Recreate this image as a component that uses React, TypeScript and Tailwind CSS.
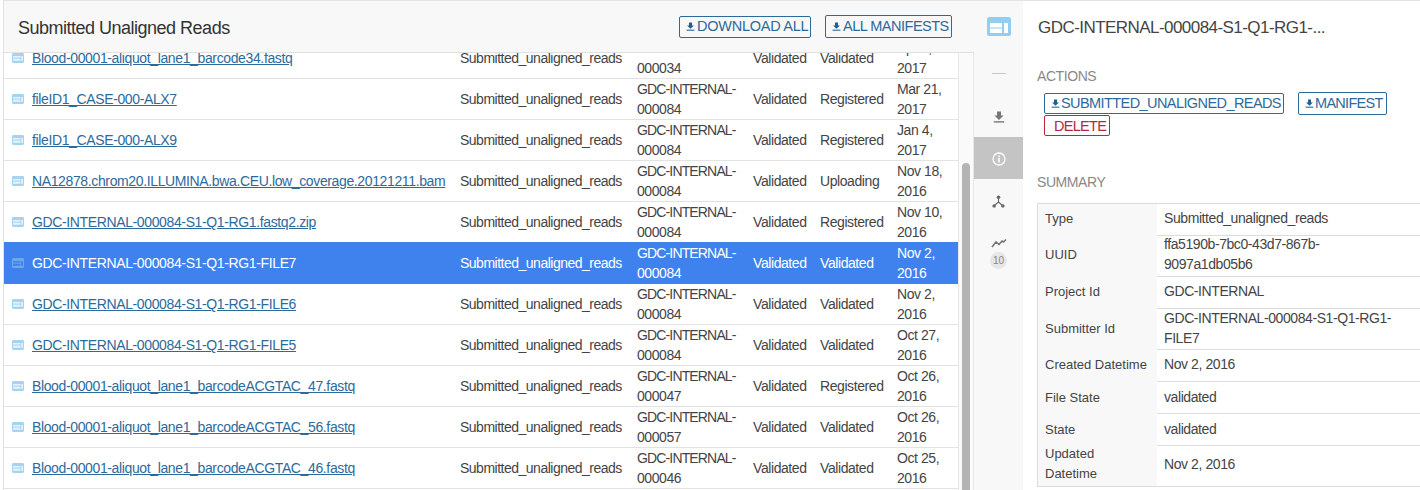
import React from "react";

const Dl = ({ c = "#1f5f95", s = 9 }: { c?: string; s?: number }) => (
  <svg width={s} height={s} viewBox="0 0 12 12" className="shrink-0">
    <path d="M4 0.5h4v4h2.6L6 9 1.4 4.5H4z" fill={c} />
    <rect x="0.8" y="10.2" width="10.4" height="1.4" fill={c} />
  </svg>
);

const FileIcon = ({ active }: { active?: boolean }) => {
  const inner = active ? "#3f82ee" : "#e3f2fb";
  return (
    <svg width="12" height="10" viewBox="0 0 12 10" className="shrink-0">
      <rect width="12" height="10" rx="1.4" fill={active ? "#6fa6ea" : "#a4d4f0"} />
      <rect x="1" y="3" width="7.4" height="1.6" fill={inner} />
      <rect x="1" y="5.6" width="7.4" height="2.2" fill={inner} />
      <rect x="9.2" y="3" width="1.8" height="4.8" fill={inner} />
    </svg>
  );
};

const rows = [
  ["Blood-00001-aliquot_lane1_barcode34.fastq", "000034", "Validated", "Apr 5,", "2017"],
  ["fileID1_CASE-000-ALX7", "000084", "Registered", "Mar 21,", "2017"],
  ["fileID1_CASE-000-ALX9", "000084", "Registered", "Jan 4,", "2017"],
  ["NA12878.chrom20.ILLUMINA.bwa.CEU.low_coverage.20121211.bam", "000084", "Uploading", "Nov 18,", "2016"],
  ["GDC-INTERNAL-000084-S1-Q1-RG1.fastq2.zip", "000084", "Registered", "Nov 10,", "2016"],
  ["GDC-INTERNAL-000084-S1-Q1-RG1-FILE7", "000084", "Validated", "Nov 2,", "2016"],
  ["GDC-INTERNAL-000084-S1-Q1-RG1-FILE6", "000084", "Validated", "Nov 2,", "2016"],
  ["GDC-INTERNAL-000084-S1-Q1-RG1-FILE5", "000084", "Validated", "Oct 27,", "2016"],
  ["Blood-00001-aliquot_lane1_barcodeACGTAC_47.fastq", "000047", "Registered", "Oct 26,", "2016"],
  ["Blood-00001-aliquot_lane1_barcodeACGTAC_56.fastq", "000057", "Validated", "Oct 26,", "2016"],
  ["Blood-00001-aliquot_lane1_barcodeACGTAC_46.fastq", "000046", "Validated", "Oct 25,", "2016"],
];

const summary: [React.ReactNode, React.ReactNode, string, string][] = [
  ["Type", "Submitted_unaligned_reads", "h-[32px]", "pb-[3px]"],
  ["UUID", <>ffa5190b-7bc0-43d7-867b-<br />9097a1db05b6</>, "h-[41px]", "pb-[4px]"],
  ["Project Id", "GDC-INTERNAL", "h-[32px]", "pb-[3px]"],
  ["Submitter Id", <>GDC-INTERNAL-000084-S1-Q1-RG1-<br />FILE7</>, "h-[41px]", "pb-[2px]"],
  ["Created Datetime", "Nov 2, 2016", "h-[32px]", "pb-[3px]"],
  ["File State", "validated", "h-[32px]", "pb-[1px]"],
  ["State", "validated", "h-[32px]", "pb-[1px]"],
  [<>Updated<br />Datetime</>, "Nov 2, 2016", "h-[40px]", "pb-[4px]"],
];

export default function App() {
  return (
    <div className="flex h-[490px] w-[1420px] overflow-hidden bg-white font-['Liberation_Sans',sans-serif] text-[14px] tracking-[-0.42px] text-[#444]">
      <div className="w-[4px] shrink-0 border-r border-[#e2e2e2] bg-white" />

      <div className="relative flex w-[970px] shrink-0 flex-col border-t border-[#e4e4e4]">
        <div className="z-10 flex h-[52px] shrink-0 items-center justify-between border-b border-[#e0e0e0] bg-[#f8f8f8] pl-[14px] pr-[22px]">
          <h1 className="pt-[3px] text-[18px] font-normal tracking-[-0.5px] text-[#333]">Submitted Unaligned Reads</h1>
          <div className="flex items-center gap-[14px]">
            <button className="flex h-[22px] w-[132px] items-center gap-[2px] whitespace-nowrap rounded-[2px] border border-[#2d6a9c] pl-[6px] text-[14.5px] tracking-[-0.25px] text-[#2d6a9c]">
              <Dl />DOWNLOAD ALL
            </button>
            <button className="flex h-[23px] w-[127px] items-center gap-[2px] whitespace-nowrap rounded-[2px] border border-[#2d6a9c] pl-[6px] text-[14.5px] tracking-[-0.5px] text-[#2d6a9c]">
              <Dl />ALL MANIFESTS
            </button>
          </div>
        </div>

        <div className="min-h-0 flex-1 overflow-hidden">
          <div className="mt-[-15px] w-[954px] leading-[20px]">
            {rows.map((r, i) => {
              const active = i === 5;
              return (
                <div
                  key={r[0]}
                  className={`grid h-[41px] grid-cols-[456px_177px_116px_67px_77px_1fr] items-center border-b ${
                    active ? "border-[#3f82ee] bg-[#3f82ee] text-white" : i === 4 ? "border-[#3f82ee]" : "border-[#e2e2e2]"
                  }`}
                >
                  <div className="flex items-center gap-[8px] pl-[8px] tracking-[-0.37px]">
                    <FileIcon active={active} />
                    <span className={active ? "" : "text-[#2d6a9c] underline"}>{r[0]}</span>
                  </div>
                  <div className="tracking-[-0.5px]">Submitted_unaligned_reads</div>
                  <div className="tracking-[-0.85px]">GDC-INTERNAL-<br /><span className="tracking-[-0.42px]">{r[1]}</span></div>
                  <div>Validated</div>
                  <div>{r[2]}</div>
                  <div className="whitespace-nowrap">{r[3]}<br />{r[4]}</div>
                </div>
              );
            })}
          </div>
        </div>

        <div className="absolute bottom-0 right-0 top-[52px] w-[16px] border-l border-r border-[#e8e8e8] bg-[#fafafa] pl-[3px] pt-[110px]">
          <div className="h-[400px] w-[8px] rounded-[4px] bg-[#b4b4b4]" />
        </div>
      </div>

      <div className="flex w-[49px] shrink-0 flex-col items-center border-t border-[#e4e4e4] bg-[#f8f8f8]">
        <div className="flex h-[52px] w-full items-center justify-center pb-[2px]">
          <svg width="24" height="19" viewBox="0 0 24 19">
            <rect width="24" height="19" rx="2.5" fill="#93cdf0" />
            <rect x="3" y="6" width="12" height="4.5" fill="#fff" />
            <rect x="3" y="11.5" width="12" height="4.5" fill="#fff" />
            <rect x="17" y="6" width="4" height="10" fill="#fff" />
          </svg>
        </div>
        <div className="flex h-[42px] w-full items-center justify-center pb-[2px]">
          <div className="h-[1px] w-[14px] bg-[#c8c8c8]" />
        </div>
        <div className="flex h-[42px] w-full items-center justify-center pt-[2px]">
          <Dl c="#777" s={12} />
        </div>
        <div className="flex h-[42px] w-full items-center justify-center bg-[#c4c4c4] pt-[2px]">
          <svg width="14" height="14" viewBox="0 0 14 14">
            <circle cx="7" cy="7" r="6" fill="none" stroke="#fff" strokeWidth="1.3" />
            <rect x="6.2" y="6" width="1.6" height="4.4" fill="#fff" />
            <rect x="6.2" y="3.6" width="1.6" height="1.5" fill="#fff" />
          </svg>
        </div>
        <div className="flex h-[44px] w-full items-center justify-center">
          <svg width="13" height="13" viewBox="0 0 13 13">
            <circle cx="6.5" cy="2.2" r="1.8" fill="#666" />
            <rect x="0.5" y="9.5" width="3.2" height="3" rx="1" fill="#666" />
            <rect x="9.3" y="9.5" width="3.2" height="3" rx="1" fill="#666" />
            <path d="M6.5 3v4L2.5 10.5M6.5 7l4 3.5" stroke="#666" strokeWidth="1.1" fill="none" />
          </svg>
        </div>
        <div className="mt-[15px] flex flex-col items-center gap-[4px]">
          <svg width="16" height="10" viewBox="0 0 16 10">
            <path d="M1 9l4-5 3 2.5L11 3l1.5 1L15 1.5" stroke="#777" strokeWidth="1.6" fill="none" />
          </svg>
          <div className="flex h-[17px] w-[17px] items-center justify-center rounded-full bg-[#e6e6e6] text-[10px] tracking-normal text-[#888]">10</div>
        </div>
      </div>

      <div className="min-w-0 flex-1 border-t border-[#e4e4e4] pl-[14px]">
        <h2 className="ml-[1px] mt-[17px] text-[17px] font-normal leading-[20px] tracking-[-0.55px] text-[#444]">GDC-INTERNAL-000084-S1-Q1-RG1-...</h2>
        <h3 className="mt-[28px] text-[14px] font-normal leading-[20px] text-[#888]">ACTIONS</h3>
        <div className="ml-[7px] mt-[6px] flex flex-wrap items-center gap-x-[14px]">
          <button className="flex h-[21px] w-[240px] items-center gap-[1px] whitespace-nowrap rounded-[2px] border border-[#2d6a9c] pl-[6px] text-[14.5px] tracking-[-0.58px] text-[#2d6a9c]">
            <Dl />SUBMITTED_UNALIGNED_READS
          </button>
          <button className="flex h-[23px] w-[89px] items-center gap-[1px] whitespace-nowrap rounded-[2px] border border-[#2d6a9c] pl-[6px] text-[14.5px] tracking-[-0.7px] text-[#2d6a9c]">
            <Dl />MANIFEST
          </button>
          <button className="h-[21px] w-[66px] whitespace-nowrap rounded-[2px] border border-[#b22a3f] pl-[6px] text-[14.5px] tracking-[-0.7px] text-[#b22a3f]">DELETE</button>
        </div>
        <h3 className="mt-[36px] text-[14px] font-normal leading-[20px] text-[#888]">SUMMARY</h3>
        <div className="mt-[11px] border-b border-l border-t border-[#dcdcdc] leading-[20px]">
          {summary.map(([k, v, h, pb], i) => (
            <div key={i} className={`grid grid-cols-[119px_1fr] grid-rows-[minmax(0,1fr)] ${h}`}>
              <div className={`flex items-center bg-[#f8f8f8] pl-[7px] text-[13px] tracking-normal text-[#444] ${pb}`}>
                <div>{k}</div>
              </div>
              <div className={`flex items-center pl-[7px] ${pb} ${i < summary.length - 1 ? "border-b border-[#dcdcdc]" : ""}`}>
                <div>{v}</div>
              </div>
            </div>
          ))}
        </div>
      </div>
    </div>
  );
}
